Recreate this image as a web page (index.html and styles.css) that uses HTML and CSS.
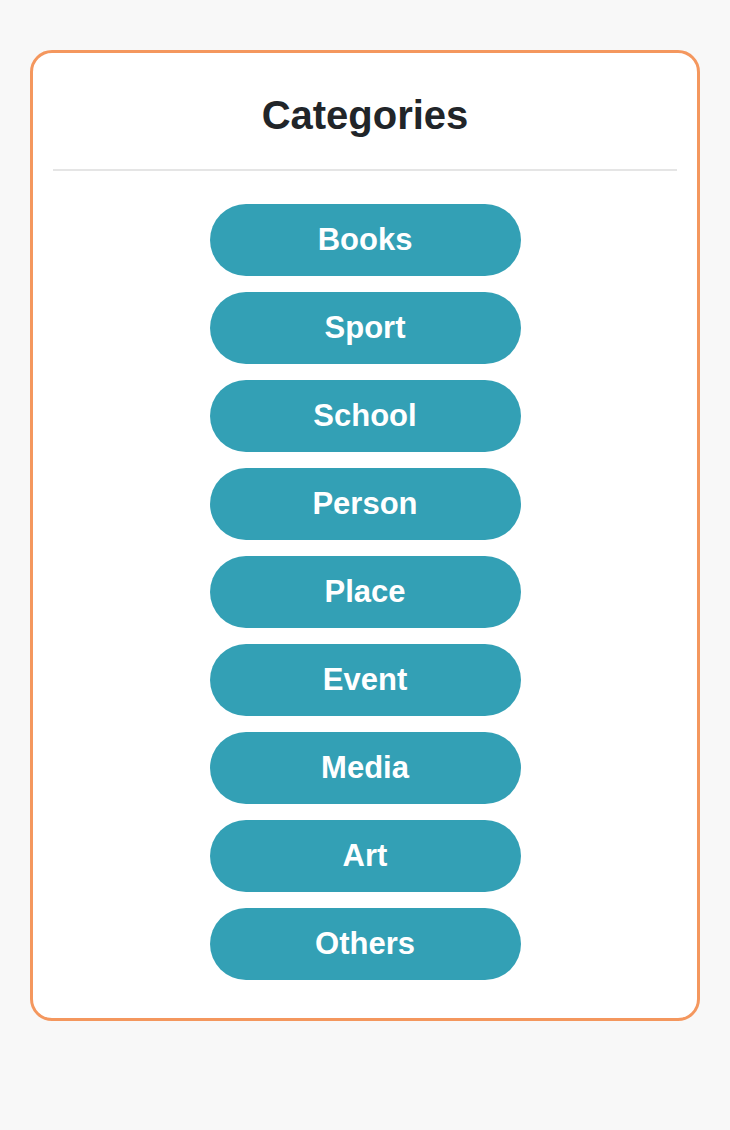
FILE: index.html
```html
<!DOCTYPE html>
<html lang="en">
<head>
<meta charset="utf-8">
<title>Categories</title>
<link rel="stylesheet" href="styles.css">
</head>
<body>
<main class="card">
  <h1 class="title">Categories</h1>
  <hr class="divider">
  <nav class="list">
    <a class="pill" href="#">Books</a>
    <a class="pill" href="#">Sport</a>
    <a class="pill" href="#">School</a>
    <a class="pill" href="#">Person</a>
    <a class="pill" href="#">Place</a>
    <a class="pill" href="#">Event</a>
    <a class="pill" href="#">Media</a>
    <a class="pill" href="#">Art</a>
    <a class="pill" href="#">Others</a>
  </nav>
</main>
</body>
</html>
```
FILE: styles.css
```css
html, body {
  margin: 0;
  padding: 0;
  background: #f8f8f8;
  font-family: "Liberation Sans", Arial, sans-serif;
}
body {
  padding: 50px 30px;
}
.card {
  box-sizing: border-box;
  width: 670px;
  background: #ffffff;
  border: 3px solid #f4975e;
  border-radius: 22px;
  padding: 20px 20px 38px;
}
.title {
  margin: 19px 0 0;
  font-size: 40px;
  font-weight: 700;
  line-height: 46px;
  text-align: center;
  color: #212529;
}
.divider {
  margin: 31px 0 33px;
  border: 0;
  height: 2px;
  background: #e5e5e5;
}
.list {
  display: flex;
  flex-direction: column;
  align-items: center;
  gap: 16px;
}
.pill {
  display: flex;
  align-items: center;
  justify-content: center;
  width: 311px;
  height: 72px;
  border-radius: 36px;
  background: #33a0b5;
  color: #ffffff;
  font-size: 31px;
  font-weight: 700;
  text-decoration: none;
}
```
